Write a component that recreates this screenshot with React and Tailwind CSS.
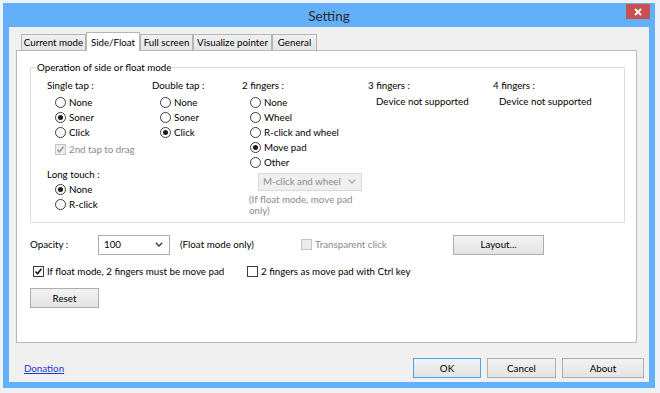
import React from "react";

const Radio = ({ label, checked }) => (
  <div className="flex h-[15px] items-center gap-[3px]">
    <span className="flex h-[11px] w-[11px] items-center justify-center rounded-full border border-[#3c3c3c] bg-white">
      {checked && <span className="h-[5px] w-[5px] rounded-full bg-[#1a1a1a]" />}
    </span>
    <span>{label}</span>
  </div>
);

const Check = ({ label, checked, disabled }) => (
  <div className={"flex h-[15px] items-center gap-[3px] " + (disabled ? "text-[#8a8a8a]" : "")}>
    <span
      className={
        "flex h-[11px] w-[11px] items-center justify-center border " +
        (disabled ? "border-[#c4c4c4] bg-[#ececec]" : "border-[#3c3c3c] bg-white")
      }
    >
      {checked && (
        <svg width="9" height="9" viewBox="0 0 9 9">
          <polyline
            points="1.5,4.5 3.5,6.8 7.5,1.8"
            fill="none"
            stroke={disabled ? "#9a9a9a" : "#1a1a1a"}
            strokeWidth="1.6"
          />
        </svg>
      )}
    </span>
    <span>{label}</span>
  </div>
);

const Chevron = ({ color }) => (
  <svg width="8" height="5" viewBox="0 0 8 5">
    <polyline points="0.8,0.8 4,4 7.2,0.8" fill="none" stroke={color} strokeWidth="1.3" />
  </svg>
);

const Button = ({ label, width, primary }) => (
  <div
    className={
      "flex h-[20px] items-center justify-center border bg-gradient-to-b from-[#f2f2f2] to-[#e3e3e3] " +
      (primary ? "border-[#4aa3f0]" : "border-[#adadad]") +
      " " +
      width
    }
  >
    {label}
  </div>
);

const tabs = [
  { name: "Current mode", w: "w-[65px]" },
  { name: "Side/Float", w: "w-[54px]", active: true },
  { name: "Full screen", w: "w-[53px]" },
  { name: "Visualize pointer", w: "w-[79px]" },
  { name: "General", w: "w-[45px]" },
];

export default function App() {
  return (
    <div className="h-[393px] w-[660px] whitespace-nowrap bg-[#eef2f6] pl-[3px] pt-[3px] font-['Lato',sans-serif] text-[9.75px] leading-[15px] text-black">
      <div className="flex h-[385px] w-[652px] flex-col bg-[#63b0fa]">
        {/* title bar */}
        <div className="grid h-[24px] grid-cols-[1fr_auto_1fr]">
          <div />
          <div className="pt-[4px] text-[13.5px] leading-[18px] text-[#2b2b2b]">Setting</div>
          <div className="flex justify-end pr-[5px] pt-[1px]">
            <div className="flex h-[15px] w-[24px] items-center justify-center bg-[#c75050]">
              <svg width="8" height="8" viewBox="0 0 8 8">
                <path d="M1 1L7 7M7 1L1 7" stroke="#fff" strokeWidth="1.8" />
              </svg>
            </div>
          </div>
        </div>

        {/* client area */}
        <div className="mx-[6px] flex h-[355px] flex-col bg-[#f0f0f0] pt-[5px]">
          {/* tabs */}
          <div className="flex h-[18px] items-end pl-[12px]">
            {tabs.map((t) => (
              <div
                key={t.name}
                className={
                  "flex items-center justify-center border-x border-t border-[#b4b4b4] " +
                  t.w +
                  (t.active
                    ? " relative z-10 -mb-px h-[19px] bg-white"
                    : " h-[16px] bg-gradient-to-b from-[#f0f0f0] to-[#e5e5e5]")
                }
              >
                {t.name}
              </div>
            ))}
          </div>

          {/* tab panel */}
          <div className="ml-[7px] flex h-[293px] w-[621px] flex-col border border-[#b9b9b9] bg-white pl-[13px]">
            <fieldset className="mt-[9px] h-[163px] w-[595px] border border-[#dcdcdc] pl-[16px] pt-[3px]">
              <legend className="-ml-[11px] px-[1px]">Operation of side or float mode</legend>
              <div className="flex">
                <div className="flex w-[105px] flex-col">
                  <div>Single tap :</div>
                  <div className="ml-[8px] mt-[2px] flex flex-col">
                    <Radio label="None" />
                    <Radio label="Soner" checked />
                    <Radio label="Click" />
                    <div className="mt-[2px]">
                      <Check label="2nd tap to drag" checked disabled />
                    </div>
                  </div>
                  <div className="mt-[10px]">Long touch :</div>
                  <div className="ml-[8px] flex flex-col">
                    <Radio label="None" checked />
                    <Radio label="R-click" />
                  </div>
                </div>

                <div className="flex w-[90px] flex-col">
                  <div>Double tap :</div>
                  <div className="ml-[8px] mt-[2px] flex flex-col">
                    <Radio label="None" />
                    <Radio label="Soner" />
                    <Radio label="Click" checked />
                  </div>
                </div>

                <div className="flex w-[126px] flex-col">
                  <div>2 fingers :</div>
                  <div className="ml-[8px] mt-[2px] flex flex-col">
                    <Radio label="None" />
                    <Radio label="Wheel" />
                    <Radio label="R-click and wheel" />
                    <Radio label="Move pad" checked />
                    <Radio label="Other" />
                  </div>
                  <div className="ml-[16px] mt-[2.5px] flex h-[18px] w-[104px] items-center justify-between border border-[#d9d9d9] bg-[#efefef] pl-[4px] pr-[5px] text-[#8a8a8a]">
                    <span>M-click and wheel</span>
                    <Chevron color="#a8a8a8" />
                  </div>
                  <div className="ml-[7px] mt-[3px] leading-[11px] text-[#8a8a8a]">
                    (If float mode, move pad
                    <br />
                    only)
                  </div>
                </div>

                <div className="flex w-[125px] flex-col">
                  <div>3 fingers :</div>
                  <div className="ml-[8px] mt-[1px]">Device not supported</div>
                </div>

                <div className="flex flex-col">
                  <div>4 fingers :</div>
                  <div className="ml-[6px] mt-[1px]">Device not supported</div>
                </div>
              </div>
            </fieldset>

            {/* opacity row */}
            <div className="mt-[11px] flex h-[21px] items-center">
              <div className="w-[68px]">Opacity :</div>
              <div className="flex h-[20px] w-[72px] items-center justify-between border border-[#acacac] bg-white pl-[5px] pr-[6px]">
                <span>100</span>
                <Chevron color="#333" />
              </div>
              <div className="ml-[10px] w-[121px]">(Float mode only)</div>
              <div className="w-[152px]">
                <Check label="Transparent click" disabled />
              </div>
              <Button label="Layout..." width="w-[91px]" />
            </div>

            <div className="ml-[3px] mt-[9px] flex">
              <div className="w-[214px]">
                <Check label="If float mode, 2 fingers must be move pad" checked />
              </div>
              <Check label="2 fingers as move pad with Ctrl key" />
            </div>

            <div className="mt-[9px]">
              <Button label="Reset" width="w-[69px]" />
            </div>
          </div>

          {/* bottom row */}
          <div className="mt-[15px] flex items-center pl-[15px] pr-[5px]">
            <span className="text-[#2437d0] underline">Donation</span>
            <div className="ml-auto flex gap-[6px]">
              <Button label="OK" width="w-[68px]" primary />
              <Button label="Cancel" width="w-[69px]" />
              <Button label="About" width="w-[82px]" />
            </div>
          </div>
        </div>
      </div>
    </div>
  );
}
